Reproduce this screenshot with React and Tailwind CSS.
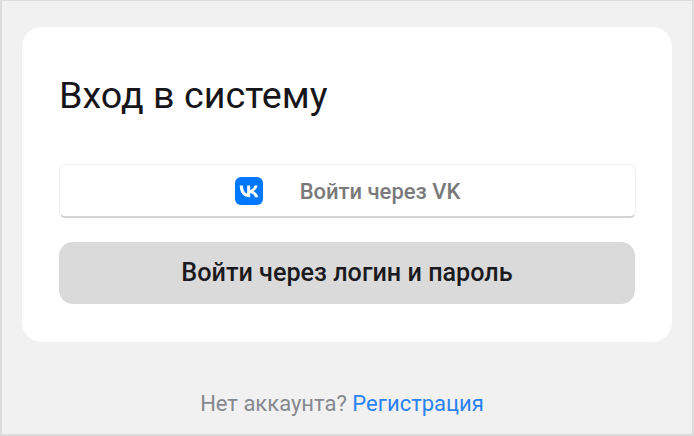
import React from "react";

const VkIcon = () => (
  <svg width="28" height="28" viewBox="0 0 28 28" className="shrink-0">
    <rect width="28" height="28" rx="6" fill="#0077FF" />
    <path
      d="M14.9 20.2C8.5 20.2 4.9 15.8 4.7 8.5H7.9C8 13.9 10.4 16.1 12.2 16.6V8.5H15.2V13.1C17 12.9 18.9 10.8 19.6 8.5H22.6C22.1 11.3 20 13.4 18.5 14.3C20 15 22.4 16.8 23.3 20.2H20C19.3 18 17.5 16.3 15.2 16.1V20.2H14.9Z"
      fill="#fff"
    />
  </svg>
);

export default function App() {
  return (
    <div className="h-[436px] w-[694px] overflow-hidden border-2 border-t border-[#dcdcdc] bg-[#f1f1f1] font-['Roboto',sans-serif]">
      <div className="flex flex-col items-center pl-5 pr-5 pt-[26px]">
        <div className="h-[315px] w-[650px] shrink-0 rounded-[20px] bg-white px-[37px] pt-[45px]">
          <h1 className="text-[37.7px] leading-[46px] font-normal text-[#16161a]">Вход в систему</h1>
          <button className="mt-[46px] flex h-[54px] w-[577px] items-center justify-center gap-[37px] rounded-md border border-[#f0f0f0] border-b-2 border-b-[#d4d4d4] bg-white text-[22px] font-medium text-[#7a7a7a]">
            <VkIcon />
            <span className="pt-px">Войти через VK</span>
          </button>
          <button className="mt-[24px] flex h-[62px] w-[576px] items-center justify-center rounded-[14px] bg-[#dadada] text-[25.2px] font-medium text-[#1b1b1f]">
            Войти через логин и пароль
          </button>
        </div>
        <p className="mt-[50px] mr-[10px] text-[22px] leading-6 text-[#85888e]">
          Нет аккаунта? <a className="text-[#2b82f0]">Регистрация</a>
        </p>
      </div>
    </div>
  );
}
